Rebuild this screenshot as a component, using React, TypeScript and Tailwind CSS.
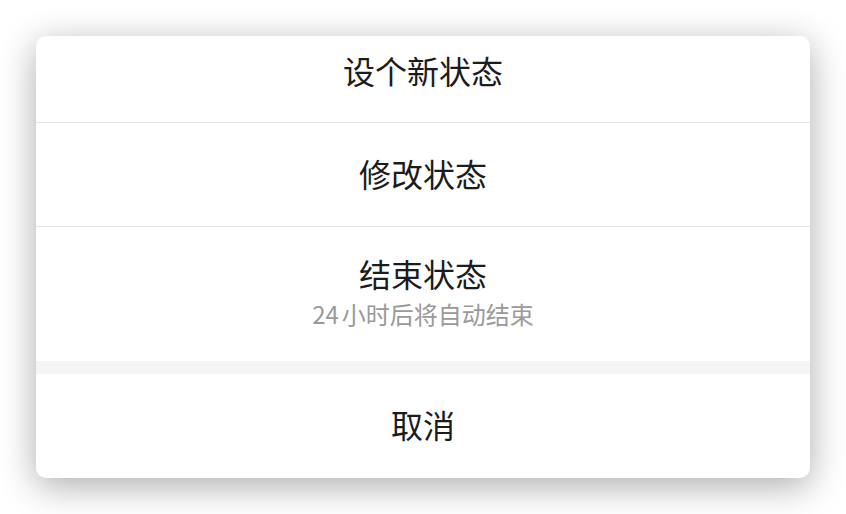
import React from "react";

const font = { fontFamily: '"Noto Sans CJK SC", "Noto Sans", sans-serif' };

export default function App() {
  return (
    <div className="w-[846px] h-[514px] bg-white overflow-hidden pt-[36px] pl-[36px]" style={font}>
      <div className="w-[774px] h-[442px] bg-white rounded-[10px] overflow-hidden shadow-[0_8px_36px_rgba(0,0,0,0.33)] flex flex-col">
        <div className="h-[86px] flex items-center justify-center pb-[18px] text-[32px] leading-none text-[#1c1c1c]">
          设个新状态
        </div>
        <div className="h-[1px] bg-[#e4e4e4]" />
        <div className="h-[103px] flex items-center justify-center pb-[4px] text-[32px] leading-none text-[#1c1c1c]">
          修改状态
        </div>
        <div className="h-[1px] bg-[#e4e4e4]" />
        <div className="h-[134px] flex flex-col items-center justify-center pb-[6px]">
          <div className="text-[32px] leading-none text-[#1c1c1c]">结束状态</div>
          <div className="mt-[13px] text-[24px] leading-none text-[#9a9a9a]">
            <span className="mr-[3px]">24</span>小时后将自动结束
          </div>
        </div>
        <div className="h-[13px] bg-[#f5f5f5]" />
        <div className="flex-1 flex items-center justify-center pb-[4px] text-[32px] leading-none text-[#1c1c1c]">
          取消
        </div>
      </div>
    </div>
  );
}
